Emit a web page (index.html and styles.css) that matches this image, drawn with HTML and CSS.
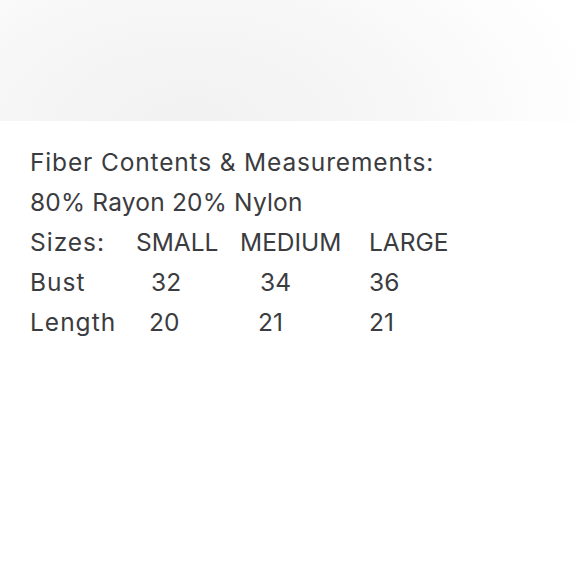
FILE: index.html
```html
<!DOCTYPE html>
<html>
<head>
<meta charset="utf-8">
<link rel="stylesheet" href="styles.css">
</head>
<body>
<div class="hero"></div>
<div class="content">
  <p class="line line-title">Fiber Contents &amp; Measurements:</p>
  <p class="line line-fiber">80% Rayon 20% Nylon</p>
  <div class="table">
    <span class="cell label">Sizes:</span>
    <span class="cell">SMALL</span>
    <span class="cell">MEDIUM</span>
    <span class="cell">LARGE</span>
    <span class="cell label">Bust</span>
    <span class="cell num-s1">32</span>
    <span class="cell num-m1">34</span>
    <span class="cell">36</span>
    <span class="cell label">Length</span>
    <span class="cell num-s2">20</span>
    <span class="cell num-m2">21</span>
    <span class="cell">21</span>
  </div>
</div>
</body>
</html>
```
FILE: styles.css
```css
html, body {
  margin: 0;
  padding: 0;
  background: #ffffff;
}
body {
  width: 580px;
  height: 580px;
  overflow: hidden;
  font-family: "Inter", "Noto Sans", sans-serif;
  color: #3b3c40;
}
.hero {
  height: 121px;
  background:
    radial-gradient(ellipse 420px 260px at 190px 130px, #f1f1f2 0%, #f6f6f7 45%, #fbfbfb 75%, #ffffff 100%);
}
.content {
  padding: 21px 0 0 30px;
}
.line {
  margin: 0;
  font-size: 24.5px;
  line-height: 40px;
}
.line-title {
  letter-spacing: 0.85px;
}
.line-fiber {
  letter-spacing: 0.2px;
}
.table {
  display: grid;
  grid-template-columns: 106px 104px 129px auto;
  font-size: 24.5px;
  line-height: 40px;
}
.label {
  letter-spacing: 1px;
}
.num-s1 { padding-left: 15px; }
.num-s2 { padding-left: 13px; }
.num-m1 { padding-left: 20px; }
.num-m2 { padding-left: 18px; }
```
